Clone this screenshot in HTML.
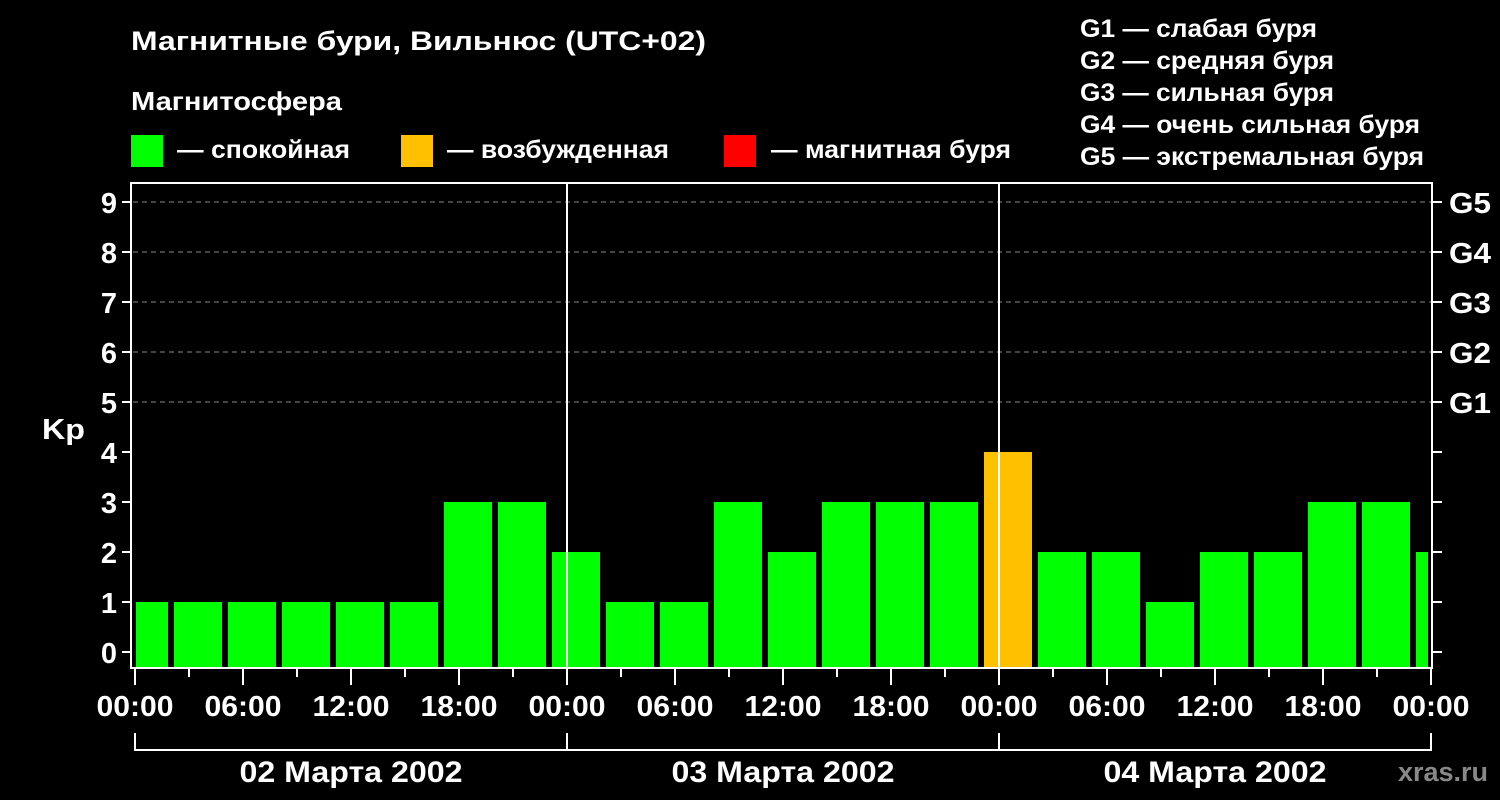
<!DOCTYPE html>
<html><head><meta charset="utf-8"><style>
body{margin:0;background:#000;}
svg text{font-family:"Liberation Sans",sans-serif;font-weight:bold;fill:#fff;}
</style></head><body>
<svg width="1500" height="800" xmlns="http://www.w3.org/2000/svg" style="display:block">
<rect width="1500" height="800" fill="#000"/>
<text x="131" y="50" font-size="27" textLength="575" lengthAdjust="spacingAndGlyphs">Магнитные бури, Вильнюс (UTC+02)</text>
<text x="131" y="110" font-size="26" textLength="211" lengthAdjust="spacingAndGlyphs">Магнитосфера</text>
<rect x="131" y="135" width="32" height="32" fill="#00ff00"/>
<text x="177" y="158" font-size="25" textLength="173" lengthAdjust="spacingAndGlyphs">— спокойная</text>
<rect x="401" y="135" width="32" height="32" fill="#ffc000"/>
<text x="447" y="158" font-size="25" textLength="222" lengthAdjust="spacingAndGlyphs">— возбужденная</text>
<rect x="724" y="135" width="32" height="32" fill="#ff0000"/>
<text x="771" y="158" font-size="25" textLength="240" lengthAdjust="spacingAndGlyphs">— магнитная буря</text>
<g font-size="25" lengthAdjust="spacingAndGlyphs">
<text x="1080" y="37" textLength="237" lengthAdjust="spacingAndGlyphs">G1 — слабая буря</text>
<text x="1080" y="69" textLength="254" lengthAdjust="spacingAndGlyphs">G2 — средняя буря</text>
<text x="1080" y="101" textLength="254" lengthAdjust="spacingAndGlyphs">G3 — сильная буря</text>
<text x="1080" y="133" textLength="340" lengthAdjust="spacingAndGlyphs">G4 — очень сильная буря</text>
<text x="1080" y="165" textLength="344" lengthAdjust="spacingAndGlyphs">G5 — экстремальная буря</text>
</g>
<g stroke="#888" stroke-width="1" stroke-dasharray="5,4">
<line x1="133" y1="202" x2="1431" y2="202"/><line x1="133" y1="252" x2="1431" y2="252"/>
<line x1="133" y1="302" x2="1431" y2="302"/><line x1="133" y1="352" x2="1431" y2="352"/>
<line x1="133" y1="402" x2="1431" y2="402"/>
</g>
<g id="bars"></g>
<line x1="567" y1="183" x2="567" y2="668" stroke="#fff" stroke-width="2"/>
<line x1="999" y1="183" x2="999" y2="668" stroke="#fff" stroke-width="2"/>
<rect x="131" y="183" width="1301" height="485" fill="none" stroke="#fff" stroke-width="2"/>
<g id="ticks" stroke="#fff" stroke-width="2"></g>
<g font-size="29" text-anchor="end" id="ylab"></g>
<g font-size="29" id="glab">
<text x="1449" y="213" textLength="42" lengthAdjust="spacingAndGlyphs">G5</text><text x="1449" y="263" textLength="42" lengthAdjust="spacingAndGlyphs">G4</text><text x="1449" y="313" textLength="42" lengthAdjust="spacingAndGlyphs">G3</text><text x="1449" y="363" textLength="42" lengthAdjust="spacingAndGlyphs">G2</text><text x="1449" y="413" textLength="42" lengthAdjust="spacingAndGlyphs">G1</text>
</g>
<text x="42" y="439" font-size="29" textLength="43" lengthAdjust="spacingAndGlyphs">Kp</text>
<g font-size="29" text-anchor="middle" id="xlab"></g>
<path d="M135 733V750H1431V733M567 733V750M999 733V750" fill="none" stroke="#fff" stroke-width="2"/>
<g font-size="30" text-anchor="middle">
<text x="351" y="782" textLength="223" lengthAdjust="spacingAndGlyphs">02 Марта 2002</text>
<text x="783" y="782" textLength="223" lengthAdjust="spacingAndGlyphs">03 Марта 2002</text>
<text x="1215" y="782" textLength="223" lengthAdjust="spacingAndGlyphs">04 Марта 2002</text>
</g>
<text x="1488" y="781" font-size="27" text-anchor="end" style="fill:#888">xras.ru</text>
</svg>
<script>
var ns="http://www.w3.org/2000/svg";
function el(p,t,a,txt){var e=document.createElementNS(ns,t);for(var k in a)e.setAttribute(k,a[k]);if(txt)e.textContent=txt;document.getElementById(p).appendChild(e);}
var v=[1,1,1,1,1,1,3,3,2,1,1,3,2,3,3,3,4,2,2,1,2,2,3,3,2];
v.forEach(function(k,i){var x1=Math.max(136,120+54*i),x2=Math.min(1428,168+54*i);var h=16+50*k;
el("bars","rect",{x:x1,y:668-h,width:x2-x1,height:h,fill:i==16?"#ffc000":"#00ff00"});});
for(var k=0;k<=9;k++){var y=652-50*k;el("ticks","line",{x1:122,y1:y,x2:131,y2:y});el("ticks","line",{x1:1432,y1:y,x2:1442,y2:y});
el("ylab","text",{x:117,y:y+11},String(k));}
var lb=["00:00","06:00","12:00","18:00"];
for(var j=0;j<=24;j++){var x=135+54*j;if(j==24)x=1431;var maj=j%2==0;el("ticks","line",{x1:x,y1:669,x2:x,y2:maj?685:677});
if(maj)el("xlab","text",{x:x,y:716,textLength:77,lengthAdjust:"spacingAndGlyphs"},lb[(j/2)%4]);}
</script>
</body></html>
